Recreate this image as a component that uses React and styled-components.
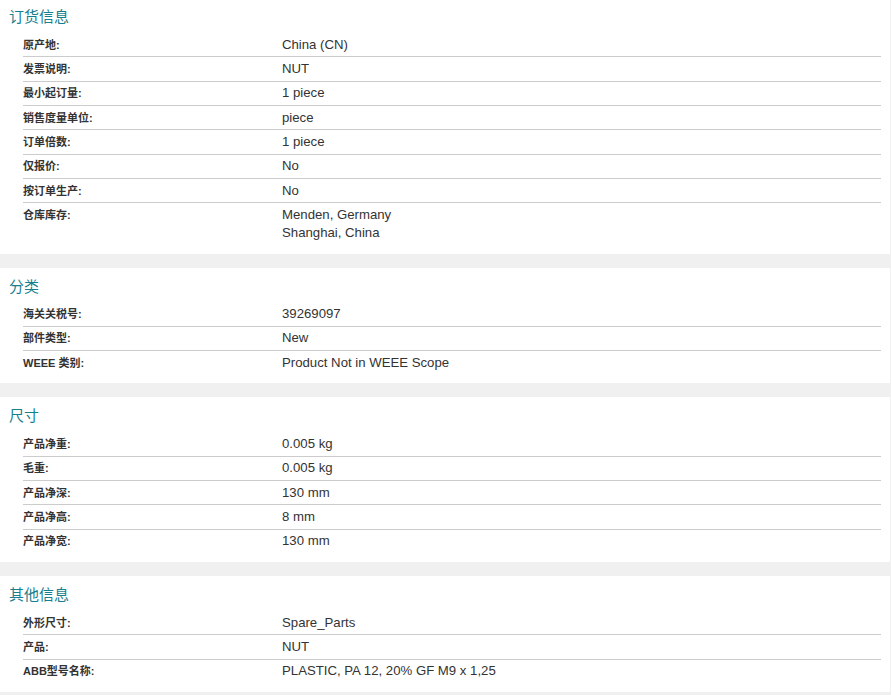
import styled, { createGlobalStyle } from "styled-components"

const sections = [
  {
    title: "订货信息",
    rows: [
      ["原产地:", ["China (CN)"]],
      ["发票说明:", ["NUT"]],
      ["最小起订量:", ["1 piece"]],
      ["销售度量单位:", ["piece"]],
      ["订单倍数:", ["1 piece"]],
      ["仅报价:", ["No"]],
      ["按订单生产:", ["No"]],
      ["仓库库存:", ["Menden, Germany", "Shanghai, China"]],
    ],
  },
  {
    title: "分类",
    rows: [
      ["海关关税号:", ["39269097"]],
      ["部件类型:", ["New"]],
      ["WEEE 类别:", ["Product Not in WEEE Scope"]],
    ],
  },
  {
    title: "尺寸",
    rows: [
      ["产品净重:", ["0.005 kg"]],
      ["毛重:", ["0.005 kg"]],
      ["产品净深:", ["130 mm"]],
      ["产品净高:", ["8 mm"]],
      ["产品净宽:", ["130 mm"]],
    ],
  },
  {
    title: "其他信息",
    rows: [
      ["外形尺寸:", ["Spare_Parts"]],
      ["产品:", ["NUT"]],
      ["ABB型号名称:", ["PLASTIC, PA 12, 20% GF M9 x 1,25"]],
    ],
  },
]

export default function App() {
  return (
    <>
      <GlobalStyle />
      <Page>
        {sections.map((section, i) => (
          <Section key={section.title} $first={i === 0}>
            <Title>{section.title}</Title>
            <List>
              {section.rows.map(([label, values]) => (
                <Row key={label}>
                  <Label>{label}</Label>
                  <Value>
                    {values.map((v) => (
                      <div key={v}>{v}</div>
                    ))}
                  </Value>
                </Row>
              ))}
            </List>
          </Section>
        ))}
      </Page>
    </>
  )
}

const GlobalStyle = createGlobalStyle`
  body {
    margin: 0;
    background: #f0f0f0;
    font-family: "Liberation Sans", Arial, "Noto Sans CJK SC", sans-serif;
    color: #333;
  }
`
const Page = styled.div`
  width: 890px;
  display: flex;
  flex-direction: column;
  gap: 14px;
`
const Section = styled.section`
  background: #fff;
  padding: ${(props) => (props.$first ? "7px" : "9px")} 9px 9px 9px;
`
const Title = styled.h2`
  margin: 0 0 6px 0;
  font-size: 15px;
  line-height: 20px;
  font-weight: normal;
  color: #177f8f;
`
const List = styled.ul`
  list-style: none;
  margin: 0 0 0 14px;
  padding: 0;
`
const Row = styled.li`
  display: flex;
  padding: 2.67px 0;
  border-bottom: 1px solid #cccccc;
  &:last-child {
    border-bottom: none;
  }
`
const Label = styled.div`
  width: 259px;
  flex-shrink: 0;
  font-size: 11px;
  font-weight: bold;
  line-height: 18px;
  color: #333;
`
const Value = styled.div`
  font-size: 13.2px;
  line-height: 18px;
  color: #333;
`
